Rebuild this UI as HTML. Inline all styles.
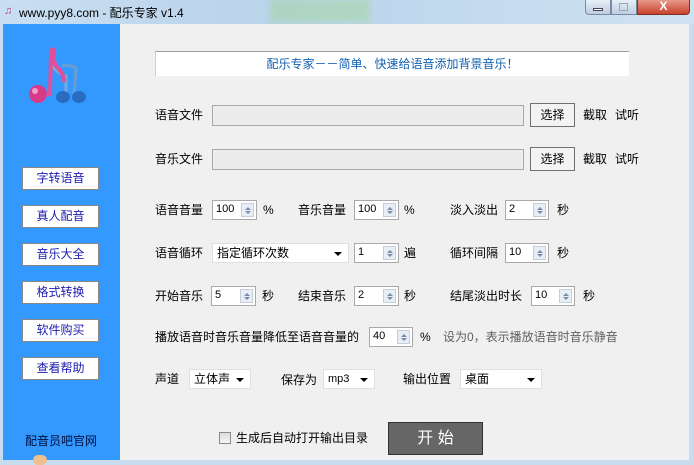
<!DOCTYPE html>
<html><head><meta charset="utf-8">
<style>
*{margin:0;padding:0;box-sizing:border-box}
body{width:694px;height:460px;overflow:hidden;background:#c8dcf0;font-family:"Liberation Sans","Noto Sans CJK SC","WenQuanYi Zen Hei",sans-serif;font-size:12px;color:#000;position:relative}
.a{position:absolute;white-space:nowrap}
#title{left:0;top:0;width:694px;height:24px;background:linear-gradient(90deg,#c9def2,#b9d3ea 40%,#cfe2f3);}
#left{left:3px;top:24px;width:117px;height:436px;background:#3399ff}
#main{left:120px;top:24px;width:569px;height:436px;background:#f0f0f0}
.lbl{line-height:14px}
.inp{background:#ececec;border:1px solid #a9a9a9}
.btn{background:#f3f3f3;border:1px solid #707070;text-align:center;line-height:22px}
.spin{background:#fff;border:1px solid #a9a9a9;height:20px;font-size:11px;line-height:17px;padding-left:3px}
.spin i{position:absolute;right:2px;top:2px;width:13px;height:14px;background:#e8eef6;border:1px solid #c5cdd8}
.spin i:before{content:"";position:absolute;left:3px;top:0px;border:3px solid transparent;border-bottom:3px solid #7a8aa8}
.spin i:after{content:"";position:absolute;left:3px;top:7px;border:3px solid transparent;border-top:3px solid #7a8aa8}
.combo{background:#fff;border:1px solid #e0e0e0;height:20px;line-height:18px;padding-left:4px}
.combo b{position:absolute;right:6px;top:8px;border:4px solid transparent;border-top:4px solid #000;border-bottom:0}
.lb{left:22px;width:77px;height:23px;background:#fff;border:1px solid #888;color:#1c1cb0;text-align:center;line-height:21px;font-size:12px}
</style></head><body>
<div class="a" id="title"></div>
<div class="a" style="left:4px;top:5px;width:12px;height:12px;color:#c04090;font-size:11px;line-height:12px">♫</div>
<div class="a" style="left:19px;top:4px;font-size:12px;color:#000">www.pyy8.com - 配乐专家 v1.4</div>
<div class="a" style="left:270px;top:0;width:100px;height:22px;background:#a6d6a6;opacity:.6;filter:blur(3px)"></div>
<div class="a" style="left:585px;top:0;width:26px;height:15px;background:linear-gradient(#e8eff8,#bccde2);border:1px solid #7a8aa0;border-top:0;border-radius:0 0 0 4px"></div>
<div class="a" style="left:593px;top:8px;width:10px;height:3px;background:#fff;border:1px solid #445"></div>
<div class="a" style="left:611px;top:0;width:26px;height:15px;background:linear-gradient(#e8eff8,#bccde2);border:1px solid #7a8aa0;border-top:0"></div>
<div class="a" style="left:619px;top:3px;width:9px;height:8px;border:1px solid #9aa;"></div>
<div class="a" style="left:637px;top:0;width:53px;height:15px;background:linear-gradient(#e89a8a,#c8402c);border:1px solid #803020;border-top:0;border-radius:0 0 4px 0;color:#fff;text-align:center;font-weight:bold;font-size:12px;line-height:13px">X</div>
<div class="a" id="left"></div>
<div class="a" id="main"></div>
<svg class="a" style="left:20px;top:44px" width="70" height="66" viewBox="0 0 70 66">
<path d="M42 22 q6 -2 14 2 l-2 28" stroke="#6a9cd0" stroke-width="3" fill="none"/>
<path d="M32 22 q6 8 14 10 l0 22" stroke="#7aa8d8" stroke-width="3" fill="none"/>
<ellipse cx="43" cy="53" rx="7" ry="6" fill="#2a6cc0"/>
<ellipse cx="59" cy="53" rx="7" ry="6" fill="#2a6cc0"/>
<path d="M30 52 L31 8 q1 -4 3 -2 l0 4 q-2 8 4 14 q6 6 6 14" stroke="#e0509a" stroke-width="4" fill="none"/>
<circle cx="18" cy="50" r="9" fill="#d83a8a"/>
<circle cx="15" cy="47" r="3" fill="#f0a0c8"/>
</svg>
<div class="a lb" style="top:167px">字转语音</div>
<div class="a lb" style="top:205px">真人配音</div>
<div class="a lb" style="top:243px">音乐大全</div>
<div class="a lb" style="top:281px">格式转换</div>
<div class="a lb" style="top:319px">软件购买</div>
<div class="a lb" style="top:357px">查看帮助</div>
<div class="a" style="left:25px;top:432px;color:#001040">配音员吧官网</div>
<div class="a" style="left:33px;top:455px;width:14px;height:10px;border-radius:7px;background:#f0c090"></div>

<div class="a" style="left:155px;top:51px;width:474px;height:25px;background:#fff;border-top:1px solid #a0a0a0;border-left:1px solid #d0d0d0;color:#1060b0;text-align:center;line-height:24px">配乐专家－－简单、快速给语音添加背景音乐！</div>

<div class="a lbl" style="left:155px;top:108px">语音文件</div>
<div class="a inp" style="left:212px;top:105px;width:312px;height:21px"></div>
<div class="a btn" style="left:530px;top:103px;width:45px;height:24px">选择</div>
<div class="a lbl" style="left:583px;top:108px">截取</div>
<div class="a lbl" style="left:615px;top:108px">试听</div>

<div class="a lbl" style="left:155px;top:152px">音乐文件</div>
<div class="a inp" style="left:212px;top:149px;width:312px;height:21px"></div>
<div class="a btn" style="left:530px;top:147px;width:45px;height:24px">选择</div>
<div class="a lbl" style="left:583px;top:152px">截取</div>
<div class="a lbl" style="left:615px;top:152px">试听</div>

<div class="a lbl" style="left:155px;top:203px">语音音量</div>
<div class="a spin" style="left:212px;top:200px;width:45px">100<i></i></div>
<div class="a lbl" style="left:263px;top:203px">%</div>
<div class="a lbl" style="left:298px;top:203px">音乐音量</div>
<div class="a spin" style="left:354px;top:200px;width:45px">100<i></i></div>
<div class="a lbl" style="left:404px;top:203px">%</div>
<div class="a lbl" style="left:450px;top:203px">淡入淡出</div>
<div class="a spin" style="left:505px;top:200px;width:44px">2<i></i></div>
<div class="a lbl" style="left:557px;top:203px">秒</div>

<div class="a lbl" style="left:155px;top:246px">语音循环</div>
<div class="a combo" style="left:212px;top:243px;width:137px">指定循环次数<b></b></div>
<div class="a spin" style="left:354px;top:243px;width:45px">1<i></i></div>
<div class="a lbl" style="left:404px;top:246px">遍</div>
<div class="a lbl" style="left:450px;top:246px">循环间隔</div>
<div class="a spin" style="left:505px;top:243px;width:44px">10<i></i></div>
<div class="a lbl" style="left:557px;top:246px">秒</div>

<div class="a lbl" style="left:155px;top:289px">开始音乐</div>
<div class="a spin" style="left:211px;top:286px;width:45px">5<i></i></div>
<div class="a lbl" style="left:262px;top:289px">秒</div>
<div class="a lbl" style="left:298px;top:289px">结束音乐</div>
<div class="a spin" style="left:354px;top:286px;width:45px">2<i></i></div>
<div class="a lbl" style="left:404px;top:289px">秒</div>
<div class="a lbl" style="left:450px;top:289px">结尾淡出时长</div>
<div class="a spin" style="left:531px;top:286px;width:44px">10<i></i></div>
<div class="a lbl" style="left:583px;top:289px">秒</div>

<div class="a lbl" style="left:155px;top:330px">播放语音时音乐音量降低至语音音量的</div>
<div class="a spin" style="left:369px;top:327px;width:44px">40<i></i></div>
<div class="a lbl" style="left:420px;top:330px">%</div>
<div class="a lbl" style="left:443px;top:330px;color:#606060">设为0，表示播放语音时音乐静音</div>

<div class="a lbl" style="left:155px;top:372px">声道</div>
<div class="a combo" style="left:189px;top:369px;width:62px">立体声<b></b></div>
<div class="a lbl" style="left:281px;top:373px">保存为</div>
<div class="a combo" style="left:323px;top:369px;width:52px;font-size:11px">mp3<b></b></div>
<div class="a lbl" style="left:403px;top:372px">输出位置</div>
<div class="a combo" style="left:460px;top:369px;width:82px">桌面<b></b></div>

<div class="a" style="left:219px;top:432px;width:12px;height:12px;border:1px solid #8a8a8a;background:linear-gradient(#dcdcdc,#f6f6f6)"></div>
<div class="a lbl" style="left:236px;top:431px">生成后自动打开输出目录</div>
<div class="a" style="left:388px;top:422px;width:95px;height:33px;background:#666;border:1px solid #333;color:#fff;font-size:16px;text-align:center;line-height:31px">开 始</div>
</body></html>
